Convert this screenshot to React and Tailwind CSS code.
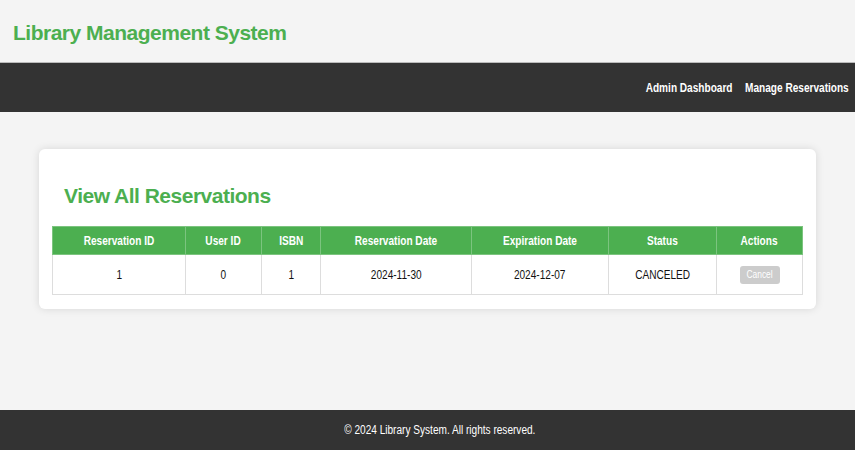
export default function App() {
  const cols = [
    { label: "Reservation ID", w: "w-[133px]", v: "1" },
    { label: "User ID", w: "w-[76px]", v: "0" },
    { label: "ISBN", w: "w-[59px]", v: "1" },
    { label: "Reservation Date", w: "w-[151px]", v: "2024-11-30" },
    { label: "Expiration Date", w: "w-[137px]", v: "2024-12-07" },
    { label: "Status", w: "w-[108px]", v: "CANCELED" },
  ];
  const sq = "inline-block scale-x-[0.84] whitespace-nowrap";
  return (
    <div className="h-[450px] flex flex-col bg-[#f4f4f4] font-['Liberation_Sans',Arial,sans-serif]">
      <header className="h-[62px] pt-[22px] pl-[13px]">
        <h1 className="text-[21px] font-bold text-[#4caf50] leading-none tracking-[-0.5px]">Library Management System</h1>
      </header>
      <nav className="h-[50px] bg-[#333] flex items-center justify-end pr-[6px] border-t border-[#bbb]">
        <div className="flex gap-[15px] scale-x-[0.84] origin-right">
          <a className="text-white text-[12px] font-bold whitespace-nowrap">Admin Dashboard</a>
          <a className="text-white text-[12px] font-bold whitespace-nowrap">Manage Reservations</a>
        </div>
      </nav>
      <main className="px-[39px] pt-[37px]">
        <div className="bg-white rounded-[6px] shadow-[0_0_8px_rgba(0,0,0,0.12)] px-[13px] pt-[36px] pb-[14px]">
          <h2 className="text-[21px] font-bold text-[#4caf50] leading-none tracking-[-0.5px] ml-[12px] mb-[20px]">View All Reservations</h2>
          <table className="w-full border-collapse text-[12px] table-fixed">
            <thead>
              <tr className="bg-[#4caf50] text-white h-[28px]">
                {cols.map((c) => (
                  <th key={c.label} className={`${c.w} font-bold border border-[#7cc47f] text-center`}>
                    <span className={sq}>{c.label}</span>
                  </th>
                ))}
                <th className="font-bold border border-[#7cc47f] text-center">
                  <span className={sq}>Actions</span>
                </th>
              </tr>
            </thead>
            <tbody>
              <tr className="h-[40px] text-[#111]">
                {cols.map((c) => (
                  <td key={c.label} className="border border-[#ddd] text-center">
                    <span className={sq}>{c.v}</span>
                  </td>
                ))}
                <td className="border border-[#ddd] text-center">
                  <button className="bg-[#ccc] text-white text-[10px] rounded-[3px] w-[40px] h-[18px] leading-none align-middle">
                    <span className={sq}>Cancel</span>
                  </button>
                </td>
              </tr>
            </tbody>
          </table>
        </div>
      </main>
      <footer className="mt-auto h-[40px] bg-[#333] flex items-center justify-center pl-[25px]">
        <p className="text-white text-[12px]">
          <span className={sq}>© 2024 Library System. All rights reserved.</span>
        </p>
      </footer>
    </div>
  );
}
